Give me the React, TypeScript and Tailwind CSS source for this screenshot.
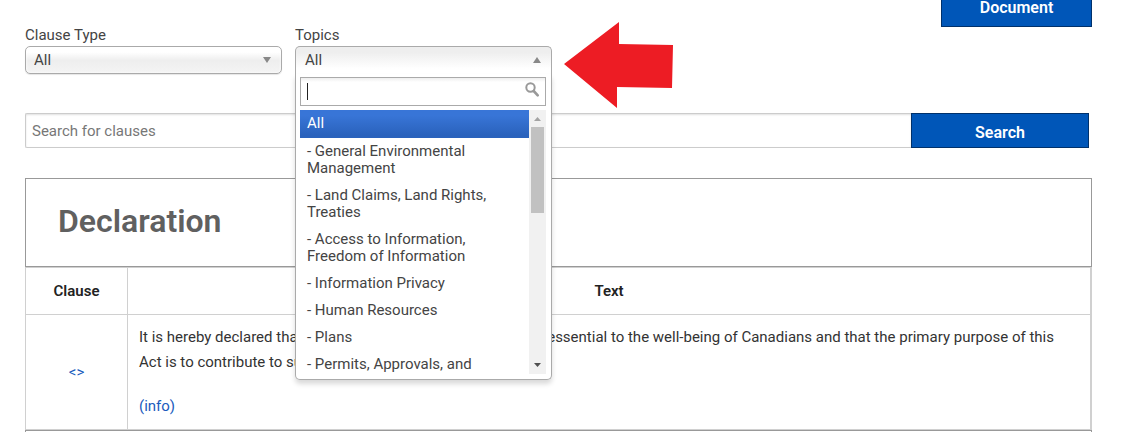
import { useState } from 'react';

const topics = [
  'All',
  '- General Environmental Management',
  '- Land Claims, Land Rights, Treaties',
  '- Access to Information, Freedom of Information',
  '- Information Privacy',
  '- Human Resources',
  '- Plans',
  '- Permits, Approvals, and Authorizations',
];

function Caret({ up = false }: { up?: boolean }) {
  return (
    <svg width="8" height="7" viewBox="0 0 8 7" className="fill-[#888]" aria-hidden="true">
      <path d={up ? 'M4 0l4 6H0z' : 'M0 0h8L4 6z'} />
    </svg>
  );
}

function ClauseTypeFilter() {
  return (
    <div className="w-[257px]">
      <label htmlFor="clause-type" className="block leading-[22px]">
        Clause Type
      </label>
      <div className="relative">
        <select
          id="clause-type"
          className="block h-7 w-full appearance-none rounded-[5px] border border-[#aaa] bg-linear-to-b from-white from-20% via-[#eee] via-52% to-[#f4f4f4] px-2 leading-[26px] text-[#444] shadow-[inset_0_0_3px_white,0_1px_1px_rgba(0,0,0,0.1)]"
        >
          <option>All</option>
        </select>
        <span className="pointer-events-none absolute top-[11px] right-[11px]">
          <Caret />
        </span>
      </div>
    </div>
  );
}

function TopicList({ value, onSelect }: { value: string; onSelect: (topic: string) => void }) {
  return (
    <div className="absolute inset-x-0 top-full z-10 rounded-b-[5px] border border-t-0 border-[#aaa] bg-white pt-[3px] pr-[5px] pb-[5px] pl-1 shadow-[0_4px_5px_rgba(0,0,0,0.15)]">
      <div className="flex h-[29px] items-center border border-[#aaa] bg-linear-to-b from-[#eee] to-white to-15% px-1.5">
        <span className="h-[17px] w-px bg-[#222]" />
        <input
          autoFocus
          aria-label="Filter topics"
          className="h-full min-w-0 grow bg-transparent text-[#444] caret-transparent outline-none"
        />
        <svg width="14" height="15" viewBox="0 0 14 15" fill="none" stroke="#999" className="mb-1" aria-hidden="true">
          <circle cx="5.5" cy="5.5" r="4.2" strokeWidth="2" />
          <path d="M8.7 9l4 4.3" strokeWidth="2.6" strokeLinecap="round" />
        </svg>
      </div>
      <div className="mt-1 flex h-[264px]">
        <ul role="listbox" aria-label="Topics" className="grow overflow-hidden text-[#444]">
          {topics.map((topic) => (
            <li
              key={topic}
              role="option"
              aria-selected={topic === value}
              onClick={() => onSelect(topic)}
              className={
                topic === value
                  ? 'bg-linear-to-b from-[#3875d7] from-20% to-[#2a62bc] to-90% px-[7px] pt-[5px] pb-1.5 leading-[17px] text-white'
                  : 'px-[7px] py-[5px] leading-[17px]'
              }
            >
              {topic}
            </li>
          ))}
        </ul>
        <div className="flex w-[17px] shrink-0 flex-col items-center bg-[#f1f1f1]" aria-hidden="true">
          <svg width="17" height="17" viewBox="0 0 17 17" className="fill-[#a3a3a3]">
            <path d="M5 11h7L8.5 7z" />
          </svg>
          <div className="h-[86px] w-[13px] bg-[#c1c1c1]" />
          <svg width="17" height="17" viewBox="0 0 17 17" className="mt-auto fill-[#505050]">
            <path d="M5 6h7L8.5 10z" />
          </svg>
        </div>
      </div>
    </div>
  );
}

function TopicsFilter() {
  const [open, setOpen] = useState(true);
  const [topic, setTopic] = useState('All');

  return (
    <div className="w-[257px]">
      <label htmlFor="topics" className="block leading-[22px]">
        Topics
      </label>
      <div className="relative">
        <button
          id="topics"
          type="button"
          aria-expanded={open}
          onClick={() => setOpen(!open)}
          className="flex h-7 w-full items-center justify-between rounded-t-[5px] border border-b-0 border-[#aaa] bg-linear-to-b from-[#eee] from-20% to-white to-80% pr-2.5 pl-[9px] text-[#444]"
        >
          {topic}
          <Caret up={open} />
        </button>
        {open && (
          <TopicList
            value={topic}
            onSelect={(t) => {
              setTopic(t);
              setOpen(false);
            }}
          />
        )}
      </div>
    </div>
  );
}

export default function App() {
  return (
    <div className="h-screen overflow-hidden bg-white pr-[45px] pl-[25px] font-['Roboto','Liberation_Sans',sans-serif] text-[15px] text-[#444]">
      <div className="flex justify-end">
        <button
          type="button"
          className="w-[151px] border border-t-0 border-[#00316b] bg-[#0056b8] pb-2.5 text-base leading-4 font-semibold text-white"
        >
          Document
        </button>
      </div>

      <div className="relative mt-[-3px] flex gap-[13px]">
        <ClauseTypeFilter />
        <TopicsFilter />
        <svg
          width="112"
          height="88"
          viewBox="0 0 112 88"
          className="absolute top-[-3px] left-[538px] fill-[#ed1c24]"
          aria-hidden="true"
        >
          <path d="M1 43L56 1V23L110 24L109 67L54 66V87Z" />
        </svg>
      </div>

      <form className="mt-[39px] mr-[3px] flex h-[35px]" onSubmit={(e) => e.preventDefault()}>
        <input
          type="text"
          aria-label="Search for clauses"
          placeholder="Search for clauses"
          className="min-w-0 grow rounded-l-[2px] border border-r-0 border-[#ccc] px-1.5 pt-0.5 shadow-[inset_0_1px_2px_rgba(0,0,0,0.12)] outline-none placeholder:text-[#777]"
        />
        <button
          type="submit"
          className="w-[178px] border border-[#00316b] bg-[#0056b8] pt-1 text-base font-semibold text-white"
        >
          Search
        </button>
      </form>

      <section className="mt-[30px]">
        <div className="border border-[#999] px-8 pt-[22px] pb-[25px]">
          <h2 className="text-[32px] leading-10 font-semibold text-[#606060]">Declaration</h2>
        </div>
        <table className="w-full border-collapse border border-r-2 border-[#d0d0d0] text-[#333]">
          <thead>
            <tr className="h-[47px] text-[#222]">
              <th className="w-[102px] border border-[#d0d0d0] font-semibold">Clause</th>
              <th className="border border-[#d0d0d0] font-semibold">Text</th>
            </tr>
          </thead>
          <tbody>
            <tr>
              <td className="border border-[#d0d0d0] text-center">
                <a href="#clause" className="text-[#1a5bbd]">
                  &lt;&gt;
                </a>
              </td>
              <td className="border border-[#d0d0d0] px-[11px] py-2.5 leading-[25px]">
                <p>
                  It is hereby declared that the protection of the environment is essential to the
                  well-being of Canadians and that the primary purpose of this Act is to contribute to
                  sustainable development.
                </p>
                <p className="mt-[19px]">
                  <a href="#info" className="text-[#1a5bbd]">
                    (info)
                  </a>
                </p>
              </td>
            </tr>
          </tbody>
        </table>
        <div className="h-20 border border-[#999]" />
      </section>
    </div>
  );
}
